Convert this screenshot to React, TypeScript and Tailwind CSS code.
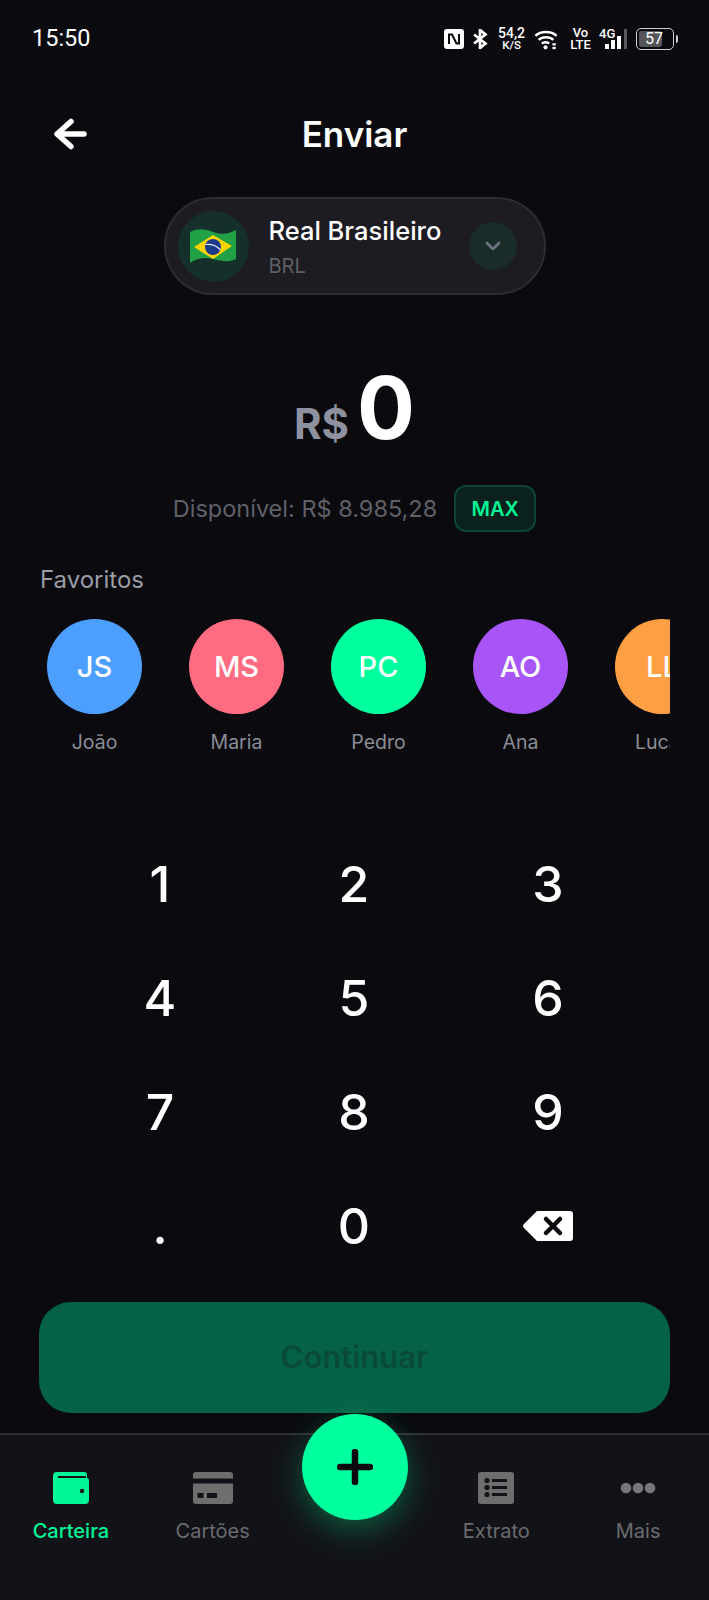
import React from "react";

const favorites = [
  { initials: "JS", name: "João", color: "bg-[#4d9fff]" },
  { initials: "MS", name: "Maria", color: "bg-[#ff6b81]" },
  { initials: "PC", name: "Pedro", color: "bg-[#00ff9d]" },
  { initials: "AO", name: "Ana", color: "bg-[#a855f7]" },
  { initials: "LL", name: "Lucas", color: "bg-[#ff9f43]" },
];

const keys = ["1", "2", "3", "4", "5", "6", "7", "8", "9", ".", "0"];

const BrazilFlag = () => (
  <svg width="46" height="35" viewBox="0 0 46 35">
    <path d="M0 3 C8 -1 15 0 23 3 C31 6 39 5 46 1 L46 30 C38 34 31 32 23 30 C15 28 7 29 0 34 Z" fill="#22a045" />
    <path d="M23 6 L42 17 L23 30 L4 18 Z" fill="#ffd400" />
    <circle cx="23" cy="18" r="8" fill="#1b3a8c" />
    <path d="M15.500 15.500 C21 15 27 17 30.500 21" stroke="#e8eef5" strokeWidth="1.200" fill="none" />
  </svg>
);

const StatusBar = () => (
  <div className="flex items-center justify-between pl-8 pr-[31px] pt-[2px] h-[76px] shrink-0 text-white font-['Roboto',sans-serif]">
    <span className="text-[23.5px] leading-none">15:50</span>
    <div className="flex items-center">
      <svg width="20" height="20" viewBox="0 0 20 20" className="mr-[8px]">
        <rect width="20" height="20" rx="3" fill="#fff" />
        <path d="M5 15V5.500H8L12.500 14.500H15V5" stroke="#0a0a0f" strokeWidth="2" fill="none" />
      </svg>
      <svg width="16" height="20" viewBox="0 0 16 22" className="mr-[10px]">
        <path d="M1.500 6L14 16L8 21V1L14 6L1.500 16" stroke="#fff" strokeWidth="3" fill="none" />
      </svg>
      <div className="flex flex-col items-center w-[27px] mr-[9px] text-[14px] font-medium leading-[13px]">
        <span>54,2</span>
        <span className="text-[11.5px] leading-[11px]">K/S</span>
      </div>
      <svg width="24" height="21" viewBox="0 0 26 22" className="mr-[13px]">
        <path d="M1.500 7C7.500 1.500 18.500 1.500 24.500 7M5 11.500C9 7.500 17 7.500 21 11.500M8.500 15.500C10.500 13.500 14.500 13.500 16.500 15.500" stroke="#fff" strokeWidth="2.600" fill="none" />
        <circle cx="12.500" cy="19.500" r="2.200" fill="#fff" />
        <rect x="20" y="15" width="3.500" height="2.500" fill="#fff" />
        <rect x="20" y="19" width="3.500" height="2.500" fill="#fff" />
      </svg>
      <div className="flex flex-col items-center w-[19px] mr-[9px] text-[13px] font-medium leading-[12px]">
        <span>Vo</span>
        <span>LTE</span>
      </div>
      <div className="relative w-[28px] h-[22px] mr-[9px]">
        <span className="absolute left-0 top-[-1px] text-[13px] font-medium leading-[13px]">4G</span>
        <svg width="28" height="22" viewBox="0 0 28 22" className="absolute left-0 top-0">
          <rect x="6" y="16" width="4" height="5" fill="#fff" />
          <rect x="12" y="12" width="4" height="9" fill="#fff" />
          <rect x="18" y="8" width="4" height="13" fill="#fff" />
          <rect x="25" y="1" width="3" height="20" fill="#5a5a5e" />
        </svg>
      </div>
      <div className="flex items-center">
        <div className="flex items-center w-[38px] h-[22px] rounded-[5px] border border-[#cfcfcf] p-[2px]">
          <div className="flex items-center w-[23px] h-full rounded-[3px] bg-[#55555a] text-[16px] font-normal leading-none pl-[6px]">
            57
          </div>
        </div>
        <div className="w-[2px] h-[8px] ml-[2px] bg-[#cfcfcf] rounded-r-sm" />
      </div>
    </div>
  </div>
);

const NavItem = ({ label, active, children }: { label: string; active?: boolean; children: React.ReactNode }) => (
  <div className="flex flex-col items-center">
    <div className="flex items-center justify-center h-[32px]">{children}</div>
    <span className={`mt-[15px] text-[20px] leading-[24px] ${active ? "font-medium text-[#00f596]" : "text-[#6b6b6f]"}`}>
      {label}
    </span>
  </div>
);

const App = () => {
  return (
    <div className="relative flex flex-col w-[709px] h-[1600px] bg-[#0a0a0f] overflow-hidden font-['Inter',sans-serif] text-white">
      <StatusBar />

      {/* header */}
      <div className="flex items-center justify-center relative h-[116px] shrink-0">
        <button className="absolute left-[52px] top-[41px]">
          <svg width="36" height="34" viewBox="0 0 36 34">
            <path d="M32 17H6M19 4.500L5 17L19 29.500" stroke="#fff" strokeWidth="5.500" strokeLinecap="round" strokeLinejoin="round" fill="none" />
          </svg>
        </button>
        <h1 className="text-[35px] font-semibold leading-none mt-[1px]">Enviar</h1>
      </div>

      {/* currency selector */}
      <div className="flex justify-center mt-[5px] shrink-0">
        <div className="flex items-center w-[382px] h-[98px] rounded-full bg-[#1c1c22] border-2 border-[#2c2c32] pl-[12px] pr-[27px]">
          <div className="flex items-center justify-center w-[71px] h-[71px] rounded-full bg-[#15302a]">
            <BrazilFlag />
          </div>
          <div className="flex flex-col ml-[20px] mt-[2px] flex-1">
            <span className="text-[25.5px] font-medium leading-[30px]">Real Brasileiro</span>
            <span className="text-[20px] leading-[24px] mt-[8px] text-[#5f5f66]">BRL</span>
          </div>
          <div className="flex items-center justify-center w-[48px] h-[48px] rounded-full bg-[#1a2c2a]">
            <svg width="20" height="20" viewBox="0 0 20 20">
              <path d="M4 7L10 13L16 7" stroke="#6b7280" strokeWidth="2.800" strokeLinecap="round" strokeLinejoin="round" fill="none" />
            </svg>
          </div>
        </div>
      </div>

      {/* amount */}
      <div className="flex items-baseline justify-center mt-[63px] h-[100px] shrink-0">
        <span className="text-[42px] font-bold leading-none text-[#8e92a0] mr-[8px]">R$</span>
        <span className="text-[86px] font-bold leading-[100px]">0</span>
      </div>

      <div className="flex items-center justify-center mt-[27px] shrink-0">
        <span className="text-[23.5px] leading-none text-[#5f6068]">Disponível: R$ 8.985,28</span>
        <button className="flex items-center justify-center w-[82px] h-[47px] ml-[17px] rounded-[12px] bg-[#0a211e] border-2 border-[#0d4433] text-[20px] font-semibold text-[#00f596]">
          MAX
        </button>
      </div>

      {/* favorites */}
      <div className="mt-[33px] px-10 shrink-0">
        <h2 className="text-[24px] leading-[30px] text-[#9a9ca6]">Favoritos</h2>
        <div className="flex gap-[47px] mt-[24px] pl-[7px] w-[630px] overflow-hidden">
          {favorites.map((f) => (
            <div key={f.name} className="flex flex-col items-center w-[95px] shrink-0">
              <div className={`flex items-center justify-center w-[95px] h-[95px] rounded-full text-[29px] font-medium ${f.color}`}>
                {f.initials}
              </div>
              <span className="mt-[16px] text-[19.5px] leading-[24px] text-[#8b8d96]">{f.name}</span>
            </div>
          ))}
        </div>
      </div>

      {/* keypad */}
      <div className="grid grid-cols-3 justify-items-center w-[582px] ml-[63px] mt-[73px] shrink-0">
        {keys.map((k) => (
          <div key={k} className="flex items-center justify-center w-full h-[114px] text-[50px] font-medium leading-none">
            {k}
          </div>
        ))}
        <div className="flex items-center justify-center w-full h-[114px]">
          <svg width="50" height="30" viewBox="0 0 50 30">
            <path d="M14 0H47Q50 0 50 3V27Q50 30 47 30H14L1 17Q-1 15 1 13Z" fill="#fff" />
            <path d="M23 8L37 22M37 8L23 22" stroke="#0a0a0f" strokeWidth="4.500" strokeLinecap="round" />
          </svg>
        </div>
      </div>

      <button className="flex items-center justify-center w-[631px] h-[111px] ml-[39px] mt-[19px] rounded-[32px] bg-[#066246] text-[31px] font-semibold text-[#0a4a38] shrink-0">
        Continuar
      </button>

      {/* bottom nav */}
      <div className="grid grid-cols-5 flex-1 mt-[20px] border-t-2 border-[#2e2f33] bg-[#121318] pt-[37px]">
        <NavItem label="Carteira" active>
          <svg width="36" height="32" viewBox="0 0 36 32">
            <path d="M4 0H31Q34 0 34 3V6H34Q36 6 36 9V28Q36 32 32 32H4Q0 32 0 28V4Q0 0 4 0Z" fill="#00f596" />
            <rect x="5" y="4" width="28" height="2" fill="#121318" />
            <circle cx="29" cy="19" r="2.200" fill="#121318" />
          </svg>
        </NavItem>
        <NavItem label="Cartões">
          <svg width="40" height="32" viewBox="0 0 40 32">
            <path d="M3 0H37Q40 0 40 3V6.500H0V3Q0 0 3 0Z" fill="#6e6e6e" />
            <path d="M0 11.500H40V29Q40 32 37 32H3Q0 32 0 29Z" fill="#6e6e6e" />
            <rect x="4.500" y="21" width="6" height="5" fill="#121318" />
            <rect x="14" y="21" width="10" height="5" fill="#121318" />
          </svg>
        </NavItem>
        <div />
        <NavItem label="Extrato">
          <svg width="36" height="32" viewBox="0 0 36 32">
            <rect width="36" height="32" rx="3" fill="#6e6e6e" />
            <circle cx="9" cy="8.500" r="2.600" fill="#121318" />
            <circle cx="9" cy="15.500" r="2.600" fill="#121318" />
            <circle cx="9" cy="22.500" r="2.600" fill="#121318" />
            <rect x="14" y="7" width="15" height="3" fill="#121318" />
            <rect x="14" y="14" width="15" height="3" fill="#121318" />
            <rect x="14" y="21" width="15" height="3" fill="#121318" />
          </svg>
        </NavItem>
        <NavItem label="Mais">
          <svg width="36" height="32" viewBox="0 0 36 32">
            <circle cx="6" cy="16" r="5.300" fill="#777" />
            <circle cx="18" cy="16" r="5.300" fill="#777" />
            <circle cx="30" cy="16" r="5.300" fill="#777" />
          </svg>
        </NavItem>
      </div>

      {/* floating action button */}
      <button className="absolute left-[302px] top-[1414px] flex items-center justify-center w-[106px] h-[106px] rounded-full bg-[#00ff9d] shadow-[0_10px_30px_rgba(0,255,157,0.3)]">
        <svg width="36" height="36" viewBox="0 0 36 36">
          <path d="M18 3V33M3 18H33" stroke="#0a0a0f" strokeWidth="6.500" strokeLinecap="round" />
        </svg>
      </button>
    </div>
  );
};

export default App;
